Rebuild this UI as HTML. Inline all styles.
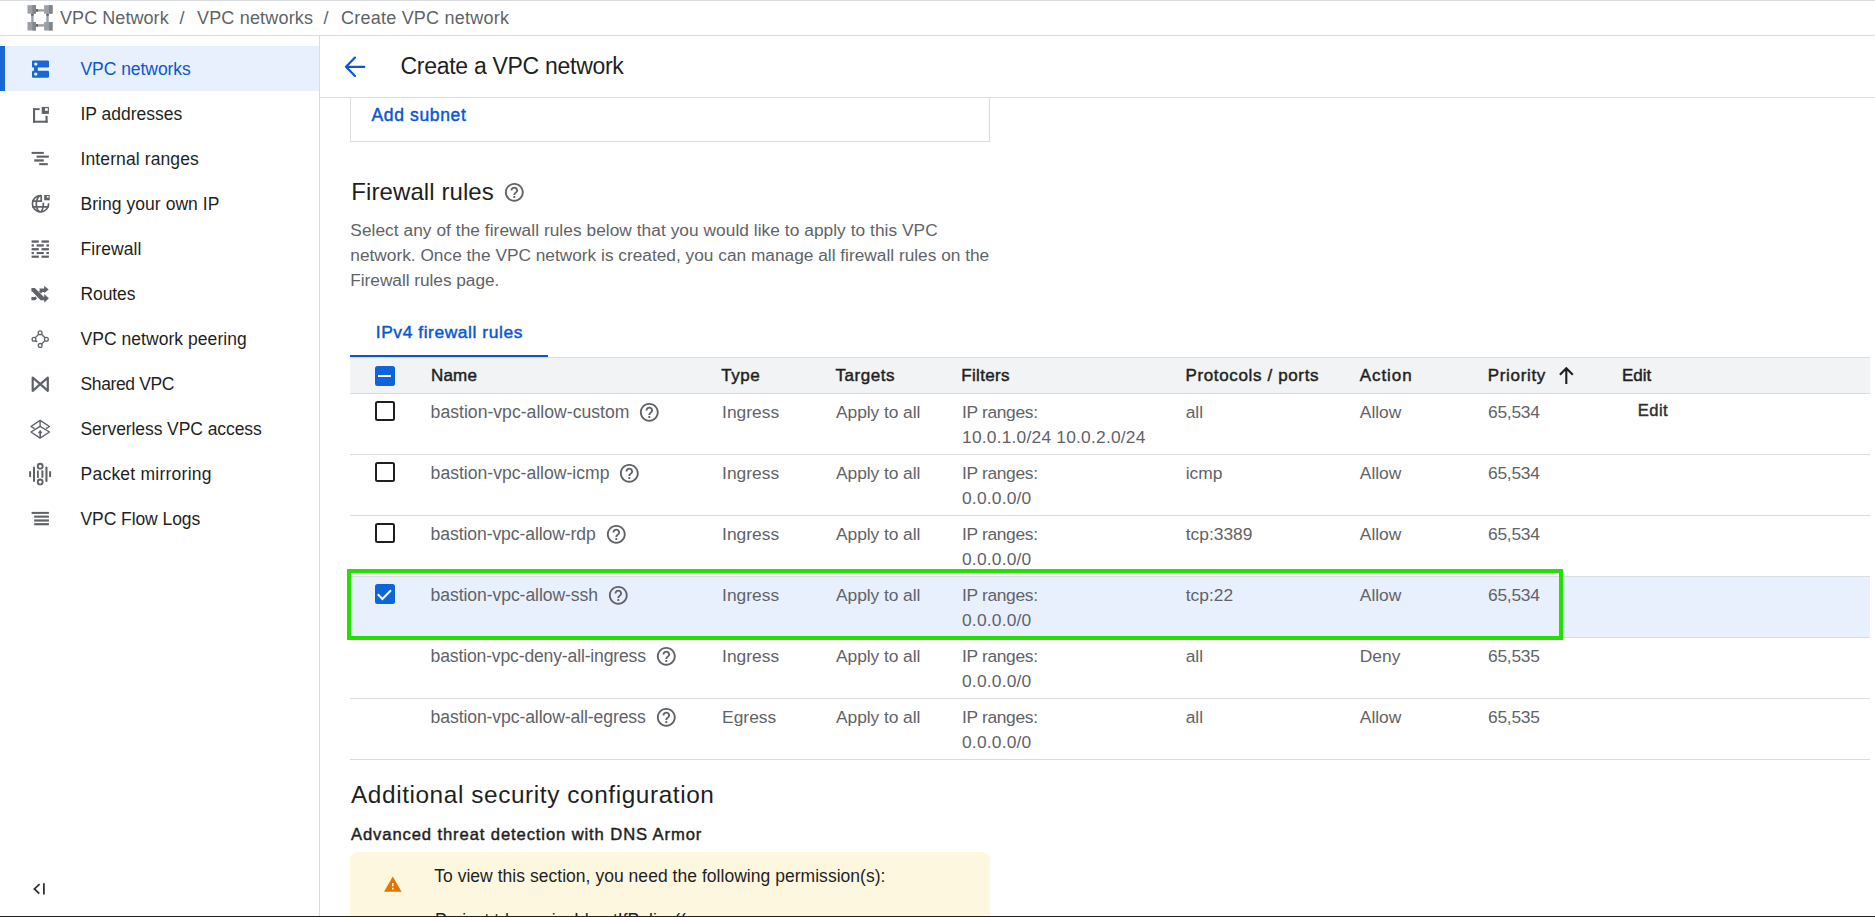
<!DOCTYPE html>
<html><head><meta charset="utf-8">
<style>
*{margin:0;padding:0;box-sizing:border-box}
html,body{width:1875px;height:917px;overflow:hidden;background:#fff;font-family:"Liberation Sans",sans-serif;color:#1f1f1f}
.a{position:absolute;white-space:nowrap;line-height:1}
svg{position:absolute;overflow:visible}
</style></head><body>
<div style="position:absolute;left:0px;top:0px;width:1875px;height:1px;background:#dadce0;"></div>
<div style="position:absolute;left:0px;top:35px;width:1875px;height:1px;background:#dadce0;"></div>
<div style="position:absolute;left:319px;top:36px;width:1px;height:880px;background:#dadce0;"></div>
<div style="position:absolute;left:320px;top:97px;width:1555px;height:1px;background:#dadce0;"></div>
<div style="position:absolute;left:0px;top:916px;width:1875px;height:1px;background:#202124;"></div>
<svg style="left:0;top:0" width="60" height="36">
<g>
<rect x="27.5" y="5.2" width="8.5" height="8.5" fill="#9aa0a6"/><rect x="32.3" y="5.2" width="3.7" height="8.5" fill="#80868b"/>
<rect x="44.1" y="5.2" width="8.5" height="8.5" fill="#9aa0a6"/><rect x="48.9" y="5.2" width="3.7" height="8.5" fill="#80868b"/>
<rect x="27.5" y="22" width="8.5" height="8.5" fill="#9aa0a6"/><rect x="32.3" y="22" width="3.7" height="8.5" fill="#80868b"/>
<rect x="44.1" y="22" width="8.5" height="8.5" fill="#9aa0a6"/><rect x="48.9" y="22" width="3.7" height="8.5" fill="#80868b"/>
<rect x="36" y="9.2" width="8.1" height="2.4" fill="#9aa0a6"/><rect x="36" y="9.2" width="2" height="2.4" fill="#5f6368"/>
<rect x="36" y="24.2" width="8.1" height="2.4" fill="#9aa0a6"/><rect x="36" y="24.2" width="2" height="2.4" fill="#5f6368"/>
<rect x="31.2" y="13.7" width="2.4" height="8.3" fill="#9aa0a6"/><rect x="31.2" y="13.7" width="2.4" height="2" fill="#5f6368"/>
<rect x="46.3" y="13.7" width="2.4" height="8.3" fill="#9aa0a6"/><rect x="46.3" y="13.7" width="2.4" height="2" fill="#5f6368"/>
</g></svg>
<div class="a" style="left:60.00px;top:8.76px;font-size:18.00px;color:#5f6368;letter-spacing:0.063px">VPC Network</div>
<div class="a" style="left:179.60px;top:8.76px;font-size:18.00px;color:#5f6368">/</div>
<div class="a" style="left:197.00px;top:8.76px;font-size:18.00px;color:#5f6368;letter-spacing:0.179px">VPC networks</div>
<div class="a" style="left:323.50px;top:8.76px;font-size:18.00px;color:#5f6368">/</div>
<div class="a" style="left:341.00px;top:8.76px;font-size:18.00px;color:#5f6368;letter-spacing:0.229px">Create VPC network</div>
<div style="position:absolute;left:0px;top:46px;width:319px;height:45px;background:#e8f0fe;"></div>
<div style="position:absolute;left:0px;top:46px;width:5px;height:45px;background:#1967d2;"></div>
<div class="a" style="left:80.50px;top:61.19px;font-size:17.50px;color:#0b57d0;letter-spacing:-0.051px">VPC networks</div>
<div class="a" style="left:80.50px;top:106.19px;font-size:17.50px;color:#1f1f1f;letter-spacing:-0.001px">IP addresses</div>
<div class="a" style="left:80.50px;top:151.19px;font-size:17.50px;color:#1f1f1f;letter-spacing:0.111px">Internal ranges</div>
<div class="a" style="left:80.50px;top:196.19px;font-size:17.50px;color:#1f1f1f;letter-spacing:0.048px">Bring your own IP</div>
<div class="a" style="left:80.50px;top:241.19px;font-size:17.50px;color:#1f1f1f;letter-spacing:0.102px">Firewall</div>
<div class="a" style="left:80.50px;top:286.19px;font-size:17.50px;color:#1f1f1f;letter-spacing:-0.108px">Routes</div>
<div class="a" style="left:80.50px;top:331.19px;font-size:17.50px;color:#1f1f1f;letter-spacing:0.047px">VPC network peering</div>
<div class="a" style="left:80.50px;top:376.19px;font-size:17.50px;color:#1f1f1f;letter-spacing:-0.376px">Shared VPC</div>
<div class="a" style="left:80.50px;top:421.19px;font-size:17.50px;color:#1f1f1f;letter-spacing:-0.082px">Serverless VPC access</div>
<div class="a" style="left:80.50px;top:466.19px;font-size:17.50px;color:#1f1f1f;letter-spacing:0.240px">Packet mirroring</div>
<div class="a" style="left:80.50px;top:511.19px;font-size:17.50px;color:#1f1f1f;letter-spacing:-0.076px">VPC Flow Logs</div>

<svg style="left:0;top:0" width="320" height="917">
<g fill="#1967d2">
 <rect x="32" y="60.4" width="17" height="7.2" rx="1.2"/>
 <rect x="32" y="70.7" width="17" height="7" rx="1.2"/>
 <rect x="34" y="67" width="3.8" height="4.2"/>
 <circle cx="35.8" cy="64.1" r="1.7" fill="#e8f0fe"/>
 <circle cx="35.8" cy="74.1" r="1.7" fill="#e8f0fe"/>
</g>
<g fill="#5f6368">
 <rect x="33" y="108.2" width="6.7" height="1.9"/>
 <rect x="33" y="108.2" width="2.1" height="14.5"/>
 <rect x="33" y="120.7" width="14.6" height="2"/>
 <rect x="45.5" y="115.8" width="2.1" height="6.9"/>
 <rect x="41.7" y="106.9" width="7.2" height="7"/>
 <rect x="45" y="108.2" width="2.8" height="2.6" fill="#fff"/>
</g>
<g fill="#5f6368">
 <rect x="31.6" y="151.9" width="12.2" height="2"/>
 <rect x="36.6" y="155.6" width="12.3" height="2.1"/>
 <rect x="34.2" y="159.3" width="9.6" height="2.3"/>
 <rect x="39.2" y="163.1" width="8.6" height="2.1"/>
</g>
<g fill="none" stroke="#5f6368" stroke-width="1.7">
 <path d="M41.2 195.7 A8.1 8.1 0 1 0 48.6 203.2"/>
 <path d="M32 201.2 H42.1 M41.2 195 V202 M32.2 206.9 H48.5"/>
 <path d="M39.5 195.6 C35.2 200 35.2 208 39.6 212.3"/>
 <path d="M43.3 202.6 C43.6 206.5 43 209.5 40.8 212.3"/>
</g>
<g fill="#5f6368">
 <rect x="44.2" y="195" width="5.5" height="5.3"/>
 <rect x="46.8" y="196" width="1.8" height="1.6" fill="#fff"/>
</g>
<g fill="#5f6368">
 <rect x="31.6" y="240.4" width="7.2" height="2.3"/><rect x="41.5" y="240.4" width="7.4" height="2.3"/>
 <rect x="31.6" y="244.3" width="2.3" height="2.3"/><rect x="36.6" y="244.3" width="7.2" height="2.3"/><rect x="46.4" y="244.3" width="2.5" height="2.3"/>
 <rect x="31.6" y="248.1" width="7.2" height="2.3"/><rect x="41.5" y="248.1" width="7.4" height="2.3"/>
 <rect x="31.6" y="252" width="2.3" height="2.1"/><rect x="36.6" y="252" width="7.2" height="2.1"/><rect x="46.4" y="252" width="2.5" height="2.1"/>
 <rect x="31.6" y="255.6" width="7.2" height="2.2"/><rect x="41.5" y="255.6" width="7.4" height="2.2"/>
</g>
<g fill="#5f6368">
 <polygon points="31.4,288 34.9,288 43.9,297 44.2,297 44.2,294 48.9,298.3 44.2,302.7 44.2,300.3 40.6,300.3 32.2,291.6 31.4,291.6"/>
 <polygon points="31.4,297 34.7,297 35.3,296.3 37,298.3 35.2,300.3 31.4,300.3"/>
 <polygon points="39.3,288.6 44.2,288.6 44.2,285.7 48.7,289.5 44.2,293.2 44.2,291.9 42.5,291.9 41,293.5 38.8,291.3 40,290.2"/>
</g>
<g fill="none" stroke="#5f6368" stroke-width="1.3">
 <circle cx="40.1" cy="332.8" r="1.9"/>
 <circle cx="34" cy="339.2" r="1.9"/>
 <circle cx="46.4" cy="339.2" r="1.9"/>
 <circle cx="40.2" cy="345.4" r="1.9"/>
 <path d="M38.7 334.2 L35.4 337.6 M41.5 334.2 L45 337.7 M45 340.6 L41.6 344 M35.3 340.6 L37.3 342"/>
</g>
<g fill="none" stroke="#5f6368" stroke-width="2.2" stroke-linejoin="round">
 <polygon points="32.7,377.7 40.3,384.2 32.7,390.8"/>
 <polygon points="47.8,377.7 40.3,384.2 47.8,390.8"/>
</g>
<g fill="none" stroke="#5f6368" stroke-width="1.4" stroke-linejoin="round">
 <path d="M34.5 428.6 L31 426.5 L40.1 420.4 L49.5 426.5 L46 428.6"/>
 <path d="M40.1 420.6 V426.3"/>
 <polygon points="40.1,426.4 49.5,432 40.1,438.2 31,432"/>
</g>
<g fill="#5f6368">
 <rect x="39.4" y="431.5" width="1.6" height="5.5"/>
 <polygon points="37.9,433.2 42.5,433.2 40.2,429.7"/>
</g>
<g fill="#5f6368">
 <rect x="29.1" y="470.9" width="2" height="6.4" rx="1"/>
 <rect x="49.1" y="470.9" width="2" height="6.4" rx="1"/>
 <rect x="33" y="466.4" width="2" height="15.5" rx="1"/>
 <rect x="45.4" y="466.4" width="2.1" height="15.5" rx="1"/>
 <rect x="37" y="470.3" width="1.8" height="7.8" rx="0.9"/>
 <rect x="41.4" y="470.3" width="2" height="7.8" rx="1"/>
</g>
<g fill="none" stroke="#5f6368" stroke-width="1.9">
 <circle cx="40.2" cy="466.2" r="2.45"/>
 <circle cx="40.2" cy="481.9" r="2.45"/>
</g>
<g fill="#5f6368">
 <rect x="31.6" y="511.9" width="17.3" height="2"/>
 <rect x="34.2" y="515.6" width="14.7" height="2.1"/>
 <rect x="34.2" y="519.4" width="14.7" height="2.2"/>
 <rect x="34.2" y="523.1" width="14.7" height="2.2"/>
</g>
<g fill="none" stroke="#303134" stroke-width="1.8" stroke-linecap="butt">
 <path d="M39.6 884.2 L34.4 888.9 L39.3 893.6"/>
 <path d="M43.9 883.3 V894.6"/>
</g>
</svg>
<svg style="left:0;top:0" width="400" height="100">
<g fill="none" stroke="#0b57d0" stroke-width="2.2" stroke-linecap="round" stroke-linejoin="round">
<path d="M346 66.8 H364.3 M355 57.6 L346 66.8 L355 75.9"/>
</g></svg>
<div class="a" style="left:400.50px;top:54.73px;font-size:23.00px;color:#1f1f1f;letter-spacing:-0.288px">Create a VPC network</div>
<div style="position:absolute;left:350px;top:98px;width:640px;height:44px;border:1px solid #dadce0;border-top:none"></div>
<div class="a" style="left:371.50px;top:107.19px;font-size:17.50px;color:#0b57d0;-webkit-text-stroke:0.45px #0b57d0;letter-spacing:0.639px">Add subnet</div>
<div class="a" style="left:351.30px;top:179.68px;font-size:24.00px;color:#1f1f1f;letter-spacing:0.088px">Firewall rules</div>
<svg style="left:503.00px;top:180.70px" width="22.60" height="22.60" viewBox="0 0 24 24"><path fill="#5f6368" d="M11 18h2v-2h-2v2zm1-16C6.48 2 2 6.48 2 12s4.48 10 10 10 10-4.48 10-10S17.52 2 12 2zm0 18c-4.41 0-8-3.59-8-8s3.59-8 8-8 8 3.59 8 8-3.59 8-8 8zm0-14c-2.21 0-4 1.79-4 4h2c0-1.1.9-2 2-2s2 .9 2 2c0 2-3 1.75-3 5h2c0-2.25 3-2.5 3-5 0-2.21-1.79-4-4-4z"/></svg>
<div class="a" style="left:350.30px;top:221.86px;font-size:17.30px;color:#5f6368;letter-spacing:0.055px">Select any of the firewall rules below that you would like to apply to this VPC</div>
<div class="a" style="left:350.30px;top:246.86px;font-size:17.30px;color:#5f6368;letter-spacing:0.002px">network. Once the VPC network is created, you can manage all firewall rules on the</div>
<div class="a" style="left:350.30px;top:271.86px;font-size:17.30px;color:#5f6368;letter-spacing:-0.042px">Firewall rules page.</div>
<div class="a" style="left:375.80px;top:324.37px;font-size:17.40px;color:#0b57d0;-webkit-text-stroke:0.45px #0b57d0;letter-spacing:0.570px">IPv4 firewall rules</div>
<div style="position:absolute;left:350px;top:355px;width:198px;height:2px;background:#0b57d0;"></div>
<div style="position:absolute;left:350px;top:357px;width:1520px;height:1px;background:#dadce0;"></div>
<div style="position:absolute;left:350px;top:358px;width:1520px;height:35px;background:#f1f3f4;"></div>
<div style="position:absolute;left:350px;top:393px;width:1520px;height:1px;background:#dadce0;"></div>
<div style="position:absolute;left:375px;top:366px;width:20px;height:20px;background:#0c65da;border-radius:2.5px"></div>
<div style="position:absolute;left:378px;top:375px;width:13px;height:2.2px;background:#fff;"></div>
<div class="a" style="left:430.90px;top:366.61px;font-size:17.00px;color:#1f1f1f;-webkit-text-stroke:0.45px #1f1f1f;letter-spacing:0.215px">Name</div>
<div class="a" style="left:721.30px;top:366.61px;font-size:17.00px;color:#1f1f1f;-webkit-text-stroke:0.45px #1f1f1f;letter-spacing:0.481px">Type</div>
<div class="a" style="left:835.50px;top:366.61px;font-size:17.00px;color:#1f1f1f;-webkit-text-stroke:0.45px #1f1f1f;letter-spacing:0.559px">Targets</div>
<div class="a" style="left:961.30px;top:366.61px;font-size:17.00px;color:#1f1f1f;-webkit-text-stroke:0.45px #1f1f1f;letter-spacing:0.304px">Filters</div>
<div class="a" style="left:1185.50px;top:366.61px;font-size:17.00px;color:#1f1f1f;-webkit-text-stroke:0.45px #1f1f1f;letter-spacing:0.636px">Protocols / ports</div>
<div class="a" style="left:1359.80px;top:366.61px;font-size:17.00px;color:#1f1f1f;-webkit-text-stroke:0.45px #1f1f1f;letter-spacing:0.911px">Action</div>
<div class="a" style="left:1487.80px;top:366.61px;font-size:17.00px;color:#1f1f1f;-webkit-text-stroke:0.45px #1f1f1f;letter-spacing:0.659px">Priority</div>
<div class="a" style="left:1622.00px;top:366.61px;font-size:17.00px;color:#1f1f1f;-webkit-text-stroke:0.45px #1f1f1f;letter-spacing:-0.030px">Edit</div>
<svg style="left:0;top:0" width="1875" height="400">
<g fill="none" stroke="#1f1f1f" stroke-width="2.1">
<path d="M1566.3 369 V384 M1559.9 374.8 L1566.3 368.3 L1572.8 374.8"/>
</g></svg>
<div style="position:absolute;left:350px;top:454px;width:1520px;height:1px;background:#dadce0;"></div>
<div class="a" style="left:430.60px;top:403.60px;font-size:17.60px;color:#5f6368;letter-spacing:0.015px">bastion-vpc-allow-custom</div>
<svg style="left:638.20px;top:400.90px" width="22.60" height="22.60" viewBox="0 0 24 24"><path fill="#5f6368" d="M11 18h2v-2h-2v2zm1-16C6.48 2 2 6.48 2 12s4.48 10 10 10 10-4.48 10-10S17.52 2 12 2zm0 18c-4.41 0-8-3.59-8-8s3.59-8 8-8 8 3.59 8 8-3.59 8-8 8zm0-14c-2.21 0-4 1.79-4 4h2c0-1.1.9-2 2-2s2 .9 2 2c0 2-3 1.75-3 5h2c0-2.25 3-2.5 3-5 0-2.21-1.79-4-4-4z"/></svg>
<div class="a" style="left:722.10px;top:403.77px;font-size:17.40px;color:#5f6368">Ingress</div>
<div class="a" style="left:836.00px;top:403.77px;font-size:17.40px;color:#5f6368;letter-spacing:-0.066px">Apply to all</div>
<div class="a" style="left:962.00px;top:403.77px;font-size:17.40px;color:#5f6368;letter-spacing:-0.333px">IP ranges:</div>
<div class="a" style="left:962.00px;top:428.77px;font-size:17.40px;color:#5f6368;letter-spacing:0.205px">10.0.1.0/24 10.0.2.0/24</div>
<div class="a" style="left:1185.70px;top:403.77px;font-size:17.40px;color:#5f6368">all</div>
<div class="a" style="left:1359.80px;top:403.77px;font-size:17.40px;color:#5f6368">Allow</div>
<div class="a" style="left:1488.00px;top:403.77px;font-size:17.40px;color:#5f6368;letter-spacing:-0.265px">65,534</div>
<div style="position:absolute;left:375px;top:401px;width:20px;height:20px;border:2px solid #1f1f1f;border-radius:2.5px"></div>
<div style="position:absolute;left:350px;top:515px;width:1520px;height:1px;background:#dadce0;"></div>
<div class="a" style="left:430.60px;top:464.60px;font-size:17.60px;color:#5f6368;letter-spacing:0.000px">bastion-vpc-allow-icmp</div>
<svg style="left:618.00px;top:461.90px" width="22.60" height="22.60" viewBox="0 0 24 24"><path fill="#5f6368" d="M11 18h2v-2h-2v2zm1-16C6.48 2 2 6.48 2 12s4.48 10 10 10 10-4.48 10-10S17.52 2 12 2zm0 18c-4.41 0-8-3.59-8-8s3.59-8 8-8 8 3.59 8 8-3.59 8-8 8zm0-14c-2.21 0-4 1.79-4 4h2c0-1.1.9-2 2-2s2 .9 2 2c0 2-3 1.75-3 5h2c0-2.25 3-2.5 3-5 0-2.21-1.79-4-4-4z"/></svg>
<div class="a" style="left:722.10px;top:464.77px;font-size:17.40px;color:#5f6368">Ingress</div>
<div class="a" style="left:836.00px;top:464.77px;font-size:17.40px;color:#5f6368;letter-spacing:-0.066px">Apply to all</div>
<div class="a" style="left:962.00px;top:464.77px;font-size:17.40px;color:#5f6368;letter-spacing:-0.333px">IP ranges:</div>
<div class="a" style="left:962.00px;top:489.77px;font-size:17.40px;color:#5f6368;letter-spacing:0.197px">0.0.0.0/0</div>
<div class="a" style="left:1185.70px;top:464.77px;font-size:17.40px;color:#5f6368">icmp</div>
<div class="a" style="left:1359.80px;top:464.77px;font-size:17.40px;color:#5f6368">Allow</div>
<div class="a" style="left:1488.00px;top:464.77px;font-size:17.40px;color:#5f6368;letter-spacing:-0.265px">65,534</div>
<div style="position:absolute;left:375px;top:462px;width:20px;height:20px;border:2px solid #1f1f1f;border-radius:2.5px"></div>
<div style="position:absolute;left:350px;top:576px;width:1520px;height:1px;background:#dadce0;"></div>
<div class="a" style="left:430.60px;top:525.60px;font-size:17.60px;color:#5f6368;letter-spacing:-0.099px">bastion-vpc-allow-rdp</div>
<svg style="left:604.90px;top:522.90px" width="22.60" height="22.60" viewBox="0 0 24 24"><path fill="#5f6368" d="M11 18h2v-2h-2v2zm1-16C6.48 2 2 6.48 2 12s4.48 10 10 10 10-4.48 10-10S17.52 2 12 2zm0 18c-4.41 0-8-3.59-8-8s3.59-8 8-8 8 3.59 8 8-3.59 8-8 8zm0-14c-2.21 0-4 1.79-4 4h2c0-1.1.9-2 2-2s2 .9 2 2c0 2-3 1.75-3 5h2c0-2.25 3-2.5 3-5 0-2.21-1.79-4-4-4z"/></svg>
<div class="a" style="left:722.10px;top:525.77px;font-size:17.40px;color:#5f6368">Ingress</div>
<div class="a" style="left:836.00px;top:525.77px;font-size:17.40px;color:#5f6368;letter-spacing:-0.066px">Apply to all</div>
<div class="a" style="left:962.00px;top:525.77px;font-size:17.40px;color:#5f6368;letter-spacing:-0.333px">IP ranges:</div>
<div class="a" style="left:962.00px;top:550.77px;font-size:17.40px;color:#5f6368;letter-spacing:0.197px">0.0.0.0/0</div>
<div class="a" style="left:1185.70px;top:525.77px;font-size:17.40px;color:#5f6368">tcp:3389</div>
<div class="a" style="left:1359.80px;top:525.77px;font-size:17.40px;color:#5f6368">Allow</div>
<div class="a" style="left:1488.00px;top:525.77px;font-size:17.40px;color:#5f6368;letter-spacing:-0.265px">65,534</div>
<div style="position:absolute;left:375px;top:523px;width:20px;height:20px;border:2px solid #1f1f1f;border-radius:2.5px"></div>
<div style="position:absolute;left:350px;top:577px;width:1520px;height:60px;background:#e8f0fe;"></div>
<div style="position:absolute;left:350px;top:637px;width:1520px;height:1px;background:#dadce0;"></div>
<div class="a" style="left:430.60px;top:586.60px;font-size:17.60px;color:#5f6368;letter-spacing:-0.086px">bastion-vpc-allow-ssh</div>
<svg style="left:606.80px;top:583.90px" width="22.60" height="22.60" viewBox="0 0 24 24"><path fill="#5f6368" d="M11 18h2v-2h-2v2zm1-16C6.48 2 2 6.48 2 12s4.48 10 10 10 10-4.48 10-10S17.52 2 12 2zm0 18c-4.41 0-8-3.59-8-8s3.59-8 8-8 8 3.59 8 8-3.59 8-8 8zm0-14c-2.21 0-4 1.79-4 4h2c0-1.1.9-2 2-2s2 .9 2 2c0 2-3 1.75-3 5h2c0-2.25 3-2.5 3-5 0-2.21-1.79-4-4-4z"/></svg>
<div class="a" style="left:722.10px;top:586.77px;font-size:17.40px;color:#5f6368">Ingress</div>
<div class="a" style="left:836.00px;top:586.77px;font-size:17.40px;color:#5f6368;letter-spacing:-0.066px">Apply to all</div>
<div class="a" style="left:962.00px;top:586.77px;font-size:17.40px;color:#5f6368;letter-spacing:-0.333px">IP ranges:</div>
<div class="a" style="left:962.00px;top:611.77px;font-size:17.40px;color:#5f6368;letter-spacing:0.197px">0.0.0.0/0</div>
<div class="a" style="left:1185.70px;top:586.77px;font-size:17.40px;color:#5f6368">tcp:22</div>
<div class="a" style="left:1359.80px;top:586.77px;font-size:17.40px;color:#5f6368">Allow</div>
<div class="a" style="left:1488.00px;top:586.77px;font-size:17.40px;color:#5f6368;letter-spacing:-0.265px">65,534</div>
<div style="position:absolute;left:375px;top:584px;width:20px;height:20px;background:#0c65da;border-radius:2.5px"></div>
<svg style="left:0;top:0" width="400" height="700"><path d="M377.8 594.3 L382.4 599 L391 590.2" fill="none" stroke="#fff" stroke-width="2.1"/></svg>
<div style="position:absolute;left:350px;top:698px;width:1520px;height:1px;background:#dadce0;"></div>
<div class="a" style="left:430.60px;top:647.60px;font-size:17.60px;color:#5f6368;letter-spacing:-0.170px">bastion-vpc-deny-all-ingress</div>
<svg style="left:655.20px;top:644.90px" width="22.60" height="22.60" viewBox="0 0 24 24"><path fill="#5f6368" d="M11 18h2v-2h-2v2zm1-16C6.48 2 2 6.48 2 12s4.48 10 10 10 10-4.48 10-10S17.52 2 12 2zm0 18c-4.41 0-8-3.59-8-8s3.59-8 8-8 8 3.59 8 8-3.59 8-8 8zm0-14c-2.21 0-4 1.79-4 4h2c0-1.1.9-2 2-2s2 .9 2 2c0 2-3 1.75-3 5h2c0-2.25 3-2.5 3-5 0-2.21-1.79-4-4-4z"/></svg>
<div class="a" style="left:722.10px;top:647.77px;font-size:17.40px;color:#5f6368">Ingress</div>
<div class="a" style="left:836.00px;top:647.77px;font-size:17.40px;color:#5f6368;letter-spacing:-0.066px">Apply to all</div>
<div class="a" style="left:962.00px;top:647.77px;font-size:17.40px;color:#5f6368;letter-spacing:-0.333px">IP ranges:</div>
<div class="a" style="left:962.00px;top:672.77px;font-size:17.40px;color:#5f6368;letter-spacing:0.197px">0.0.0.0/0</div>
<div class="a" style="left:1185.70px;top:647.77px;font-size:17.40px;color:#5f6368">all</div>
<div class="a" style="left:1359.80px;top:647.77px;font-size:17.40px;color:#5f6368">Deny</div>
<div class="a" style="left:1488.00px;top:647.77px;font-size:17.40px;color:#5f6368;letter-spacing:-0.265px">65,535</div>
<div style="position:absolute;left:350px;top:759px;width:1520px;height:1px;background:#dadce0;"></div>
<div class="a" style="left:430.60px;top:708.60px;font-size:17.60px;color:#5f6368;letter-spacing:-0.105px">bastion-vpc-allow-all-egress</div>
<svg style="left:654.50px;top:705.90px" width="22.60" height="22.60" viewBox="0 0 24 24"><path fill="#5f6368" d="M11 18h2v-2h-2v2zm1-16C6.48 2 2 6.48 2 12s4.48 10 10 10 10-4.48 10-10S17.52 2 12 2zm0 18c-4.41 0-8-3.59-8-8s3.59-8 8-8 8 3.59 8 8-3.59 8-8 8zm0-14c-2.21 0-4 1.79-4 4h2c0-1.1.9-2 2-2s2 .9 2 2c0 2-3 1.75-3 5h2c0-2.25 3-2.5 3-5 0-2.21-1.79-4-4-4z"/></svg>
<div class="a" style="left:722.10px;top:708.77px;font-size:17.40px;color:#5f6368">Egress</div>
<div class="a" style="left:836.00px;top:708.77px;font-size:17.40px;color:#5f6368;letter-spacing:-0.066px">Apply to all</div>
<div class="a" style="left:962.00px;top:708.77px;font-size:17.40px;color:#5f6368;letter-spacing:-0.333px">IP ranges:</div>
<div class="a" style="left:962.00px;top:733.77px;font-size:17.40px;color:#5f6368;letter-spacing:0.197px">0.0.0.0/0</div>
<div class="a" style="left:1185.70px;top:708.77px;font-size:17.40px;color:#5f6368">all</div>
<div class="a" style="left:1359.80px;top:708.77px;font-size:17.40px;color:#5f6368">Allow</div>
<div class="a" style="left:1488.00px;top:708.77px;font-size:17.40px;color:#5f6368;letter-spacing:-0.265px">65,535</div>
<div class="a" style="left:1637.80px;top:402.85px;font-size:16.60px;color:#303134;-webkit-text-stroke:0.45px #303134;letter-spacing:0.399px">Edit</div>
<div style="position:absolute;left:347px;top:569px;width:1216px;height:71px;border:4px solid #22e000"></div>
<div class="a" style="left:351.00px;top:782.55px;font-size:24.40px;color:#1f1f1f;letter-spacing:0.578px">Additional security configuration</div>
<div class="a" style="left:351.00px;top:826.95px;font-size:16.60px;color:#1f1f1f;-webkit-text-stroke:0.45px #1f1f1f;letter-spacing:0.894px">Advanced threat detection with DNS Armor</div>
<div style="position:absolute;left:350px;top:852px;width:640px;height:120px;background:#fef7e0;border-radius:8px;overflow:hidden"></div>
<svg style="left:383.8px;top:874.8px" width="17.6" height="17.6" viewBox="0 0 22 22"><path fill="#e37400" d="M1 21h22L12 2 1 21zm12-3h-2v-2h2v2zm0-4h-2v-4h2v4z" transform="translate(-1,0)"/></svg>
<div class="a" style="left:434.20px;top:867.69px;font-size:17.50px;color:#1f1f1f;letter-spacing:0.033px">To view this section, you need the following permission(s):</div>
<div class="a" style="left:435.00px;top:912.19px;font-size:17.50px;color:#1f1f1f">Project.tdaserviceId.getIfPolicy((</div>
<div style="position:absolute;left:0px;top:916px;width:1875px;height:1px;background:#202124;"></div>
</body></html>
